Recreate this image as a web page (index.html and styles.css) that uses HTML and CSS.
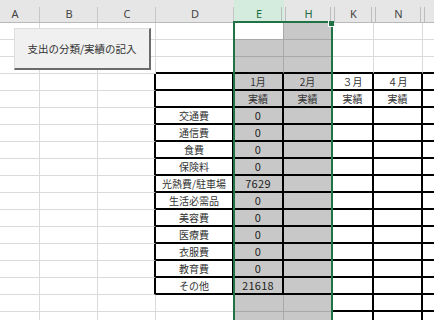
FILE: index.html
```html
<!DOCTYPE html>
<html lang="ja">
<head>
<meta charset="utf-8">
<link rel="stylesheet" href="styles.css">
</head>
<body>
<div class="stage">
  <div class="sheet">
    <div class="hdr">
      <div class="h">A</div>
      <div class="h">B</div>
      <div class="h">C</div>
      <div class="h">D</div>
      <div class="h sel hr2">E</div>
      <div class="h sel hl hr2">H</div>
      <div class="h hl hr2">K</div>
      <div class="h hl hr2">N</div>
      <div class="h hl"></div>
    </div>
    <div class="grid">
      <!-- row 1 -->
      <div class="c"></div><div class="c"></div><div class="c"></div><div class="c"></div>
      <div class="c act"></div><div class="c g"></div><div class="c"></div><div class="c"></div><div class="c"></div>
      <!-- row 2 -->
      <div class="c"></div><div class="c"></div><div class="c"></div><div class="c"></div>
      <div class="c g"></div><div class="c g"></div><div class="c"></div><div class="c"></div><div class="c"></div>
      <!-- row 3 -->
      <div class="c"></div><div class="c"></div><div class="c"></div><div class="c bt"></div>
      <div class="c g bt"></div><div class="c g bt"></div><div class="c bt"></div><div class="c bt"></div><div class="c bt"></div>
      <!-- row 4 -->
      <div class="c"></div><div class="c"></div><div class="c br"></div><div class="c t"></div>
      <div class="c g t">1月</div><div class="c g t">2月</div><div class="c t">３月</div><div class="c t">４月</div><div class="c t"></div>
      <!-- row 5 -->
      <div class="c"></div><div class="c"></div><div class="c br"></div><div class="c t"></div>
      <div class="c g t">実績</div><div class="c g t">実績</div><div class="c t">実績</div><div class="c t">実績</div><div class="c t"></div>
      <!-- row 6 -->
      <div class="c"></div><div class="c"></div><div class="c br"></div><div class="c t">交通費</div>
      <div class="c g t num">0</div><div class="c g t"></div><div class="c t"></div><div class="c t"></div><div class="c t"></div>
      <!-- row 7 -->
      <div class="c"></div><div class="c"></div><div class="c br"></div><div class="c t">通信費</div>
      <div class="c g t num">0</div><div class="c g t"></div><div class="c t"></div><div class="c t"></div><div class="c t"></div>
      <!-- row 8 -->
      <div class="c"></div><div class="c"></div><div class="c br"></div><div class="c t">食費</div>
      <div class="c g t num">0</div><div class="c g t"></div><div class="c t"></div><div class="c t"></div><div class="c t"></div>
      <!-- row 9 -->
      <div class="c"></div><div class="c"></div><div class="c br"></div><div class="c t">保険料</div>
      <div class="c g t num">0</div><div class="c g t"></div><div class="c t"></div><div class="c t"></div><div class="c t"></div>
      <!-- row 10 -->
      <div class="c"></div><div class="c"></div><div class="c br"></div><div class="c t">光熱費/駐車場</div>
      <div class="c g t num">7629</div><div class="c g t"></div><div class="c t"></div><div class="c t"></div><div class="c t"></div>
      <!-- row 11 -->
      <div class="c"></div><div class="c"></div><div class="c br"></div><div class="c t">生活必需品</div>
      <div class="c g t num">0</div><div class="c g t"></div><div class="c t"></div><div class="c t"></div><div class="c t"></div>
      <!-- row 12 -->
      <div class="c"></div><div class="c"></div><div class="c br"></div><div class="c t">美容費</div>
      <div class="c g t num">0</div><div class="c g t"></div><div class="c t"></div><div class="c t"></div><div class="c t"></div>
      <!-- row 13 -->
      <div class="c"></div><div class="c"></div><div class="c br"></div><div class="c t">医療費</div>
      <div class="c g t num">0</div><div class="c g t"></div><div class="c t"></div><div class="c t"></div><div class="c t"></div>
      <!-- row 14 -->
      <div class="c"></div><div class="c"></div><div class="c br"></div><div class="c t">衣服費</div>
      <div class="c g t num">0</div><div class="c g t"></div><div class="c t"></div><div class="c t"></div><div class="c t"></div>
      <!-- row 15 -->
      <div class="c"></div><div class="c"></div><div class="c br"></div><div class="c t">教育費</div>
      <div class="c g t num">0</div><div class="c g t"></div><div class="c t"></div><div class="c t"></div><div class="c t"></div>
      <!-- row 16 -->
      <div class="c"></div><div class="c"></div><div class="c br"></div><div class="c t">その他</div>
      <div class="c g t num">21618</div><div class="c g t"></div><div class="c t"></div><div class="c t"></div><div class="c t"></div>
      <!-- row 17 -->
      <div class="c"></div><div class="c"></div><div class="c"></div><div class="c"></div>
      <div class="c g"></div><div class="c g"></div><div class="c t"></div><div class="c t"></div><div class="c t"></div>
      <!-- row 18 -->
      <div class="c"></div><div class="c"></div><div class="c"></div><div class="c"></div>
      <div class="c g"></div><div class="c g"></div><div class="c t"></div><div class="c t"></div><div class="c t"></div>
    </div>
  </div>

  <div class="button">支出の分類/実績の記入</div>
  <div class="selection"><span class="handle"></span></div>
</div>
</body>
</html>
```
FILE: styles.css
```css
html, body {
  margin: 0;
  padding: 0;
  background: #ffffff;
  overflow: hidden;
}

.stage {
  position: relative;
  width: 434px;
  height: 320px;
  overflow: hidden;
  font-family: "Noto Sans CJK JP", "Noto Sans", sans-serif;
}

.sheet {
  margin-left: -10px;
  width: 454px;
}

.hdr,
.grid {
  display: grid;
  grid-template-columns: 50px 58px 58px 78px 50px 49px 41px 49px 21px;
}

.hdr {
  height: 23px;
}

.h {
  box-sizing: border-box;
  height: 23px;
  border-bottom: 1px solid #b9b9b9;
  background:
    linear-gradient(#c6c6c6, #c6c6c6) right 0 bottom 0 / 1px 15px no-repeat,
    #e6e6e6;
  display: flex;
  align-items: center;
  justify-content: center;
  padding-top: 4px;
  font-family: "Noto Sans", "Liberation Sans", sans-serif;
  font-size: 11px;
  color: #444444;
}

.h.hr2 {
  background:
    linear-gradient(#bdbdbd, #bdbdbd) right 2px bottom 0 / 1px 15px no-repeat,
    #e6e6e6;
}

.h.hl {
  background:
    linear-gradient(#bdbdbd, #bdbdbd) left 1px bottom 0 / 1px 15px no-repeat,
    #e6e6e6;
}

.h.hl.hr2 {
  background:
    linear-gradient(#bdbdbd, #bdbdbd) left 1px bottom 0 / 1px 15px no-repeat,
    linear-gradient(#bdbdbd, #bdbdbd) right 2px bottom 0 / 1px 15px no-repeat,
    #e6e6e6;
}

.h.sel {
  background-color: #d3ecdd;
  color: #1d6b41;
}

.grid {
  grid-auto-rows: 17px;
}

.c {
  box-sizing: border-box;
  border-right: 1px solid #dadada;
  border-bottom: 1px solid #dadada;
  display: flex;
  align-items: center;
  justify-content: center;
  font-size: 10px;
  line-height: 1;
  color: #333333;
  white-space: nowrap;
  overflow: hidden;
}

.c.act {
  border-bottom-color: #a9a9a9;
  border-right-color: #a9a9a9;
}

.c.g {
  background: #c8c8c8;
  border-right-color: #a9a9a9;
  border-bottom-color: #a9a9a9;
}

.c.bt {
  border-bottom: 2px solid #000000;
}

.c.br {
  border-right: 2px solid #000000;
}

.c.t {
  border-right: 2px solid #000000;
  border-bottom: 2px solid #000000;
}

.c.num {
  font-size: 11px;
  color: #222222;
  letter-spacing: 0.3px;
}

.button {
  position: absolute;
  left: 14px;
  top: 28px;
  width: 137px;
  height: 42px;
  box-sizing: border-box;
  background: #f0f0f0;
  border-top: 1px solid #dedede;
  border-left: 1px solid #dedede;
  border-right: 2px solid #6b6b6b;
  border-bottom: 2px solid #6b6b6b;
  display: flex;
  align-items: center;
  justify-content: center;
  font-size: 10.5px;
  color: #333333;
  white-space: nowrap;
}

.selection {
  position: absolute;
  left: 233px;
  top: 21px;
  width: 100px;
  height: 320px;
  box-sizing: border-box;
  border: 2px solid #217346;
}

.handle {
  position: absolute;
  right: -3px;
  top: -2px;
  width: 5px;
  height: 5px;
  background: #217346;
  border-left: 1px solid #ffffff;
  border-bottom: 1px solid #ffffff;
}
```
